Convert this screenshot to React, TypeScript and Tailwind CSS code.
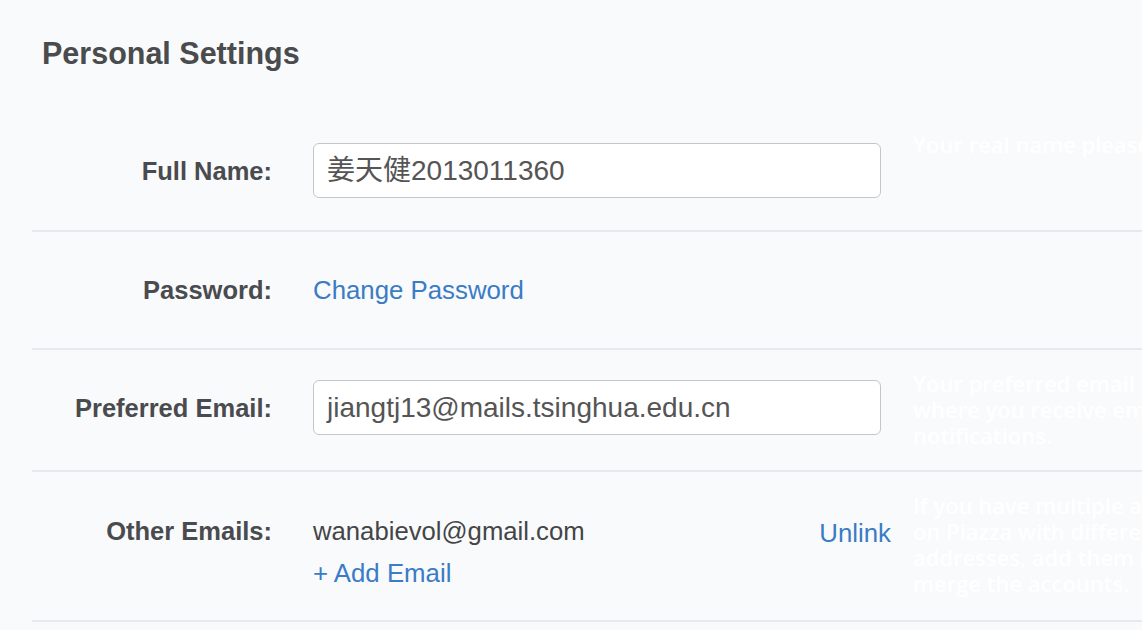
import React from "react";

const sans = "font-['Liberation_Sans','Noto_Sans_CJK_SC',Arial,sans-serif]";
const hintCls =
  "font-['Open_Sans',sans-serif] font-semibold text-white text-[22px] leading-[26px] whitespace-nowrap";

function Label({ children }: { children: React.ReactNode }) {
  return (
    <div className="w-[240px] shrink-0 text-right text-[25.5px] leading-[32px] font-bold text-[#494b4e]">
      {children}
    </div>
  );
}

export default function App() {
  return (
    <div
      className={`w-[1142px] h-[630px] overflow-hidden bg-[#f9fafc] ${sans}`}
    >
      <div className="pl-[32px]">
        <h1 className="pt-[35px] pl-[10px] h-[113px] text-[30.5px] leading-[36px] font-bold text-[#4a4b4d]">
          Personal Settings
        </h1>

        {/* Full Name */}
        <div className="flex h-[119px] border-b-2 border-[#e8e9ec] whitespace-nowrap">
          <div className="pt-[30px] flex">
            <div className="h-[55px] flex items-center">
              <Label>Full Name:</Label>
            </div>
            <div className="ml-[41px] w-[578px] shrink-0">
              <div className="w-[568px] h-[55px] bg-white border border-[#c6c6c6] rounded-[6px] flex items-center pl-[13px] text-[28px] text-[#555555]">
                姜天健2013011360
              </div>
            </div>
          </div>
          <div className={`ml-[22px] pt-[18px] ${hintCls}`}>
            Your real name please
          </div>
        </div>

        {/* Password */}
        <div className="flex items-center h-[118px] border-b-2 border-[#e8e9ec] whitespace-nowrap">
          <Label>Password:</Label>
          <a className="ml-[41px] text-[25.8px] leading-[32px] text-[#3a7cc5] cursor-pointer">
            Change Password
          </a>
        </div>

        {/* Preferred Email */}
        <div className="flex h-[122px] border-b-2 border-[#e8e9ec] whitespace-nowrap">
          <div className="pt-[30px] flex">
            <div className="h-[55px] flex items-center">
              <Label>Preferred Email:</Label>
            </div>
            <div className="ml-[41px] w-[578px] shrink-0">
              <div className="w-[568px] h-[55px] bg-white border border-[#c6c6c6] rounded-[6px] flex items-center pl-[13px] text-[28px] text-[#555555]">
                jiangtj13@mails.tsinghua.edu.cn
              </div>
            </div>
          </div>
          <div className={`ml-[22px] pt-[20px] ${hintCls}`}>
            Your preferred email address is
            <br />
            where you receive email
            <br />
            notifications.
          </div>
        </div>

        {/* Other Emails */}
        <div className="flex h-[150px] border-b-2 border-[#e8e9ec] whitespace-nowrap">
          <div className="pt-[43px] flex">
            <Label>Other Emails:</Label>
            <div className="ml-[41px] w-[578px] shrink-0 flex flex-col gap-[10px]">
              <div className="flex justify-between">
                <span className="text-[25.7px] leading-[32px] text-[#444547]">
                  wanabievol@gmail.com
                </span>
                <a className="text-[25.8px] leading-[32px] text-[#3a7cc5] translate-y-[2px] cursor-pointer">
                  Unlink
                </a>
              </div>
              <a className="text-[25.8px] leading-[32px] text-[#3a7cc5] cursor-pointer">
                + Add Email
              </a>
            </div>
          </div>
          <div className={`ml-[22px] pt-[20px] ${hintCls}`}>
            If you have multiple accounts
            <br />
            on Piazza with different email
            <br />
            addresses, add them here to
            <br />
            merge the accounts.
          </div>
        </div>
      </div>
    </div>
  );
}
